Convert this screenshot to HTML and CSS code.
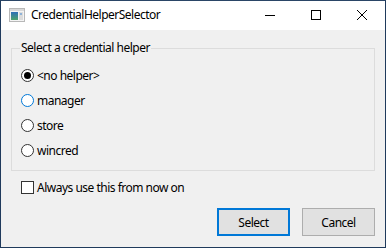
FILE: index.html
```html
<!DOCTYPE html>
<html>
<head>
<meta charset="utf-8">
<link rel="stylesheet" href="styles.css">
</head>
<body>
<div class="window">
  <div class="titlebar">
    <svg class="app-icon" width="16" height="14" viewBox="0 0 16 14">
      <rect x="0.5" y="0.5" width="15" height="13" fill="#f4f4f4" stroke="#b8b8b8"/>
      <rect x="1" y="1" width="14" height="2" fill="#d8d8d8"/>
      <defs>
        <linearGradient id="g" x1="0" y1="0" x2="0" y2="1">
          <stop offset="0" stop-color="#2f6fb8"/>
          <stop offset="1" stop-color="#4fa36a"/>
        </linearGradient>
      </defs>
      <rect x="2" y="4" width="7" height="8" fill="url(#g)"/>
      <rect x="10" y="4" width="4" height="8" fill="#dcdcdc"/>
      <rect x="11" y="5" width="2" height="2" fill="#8fb3d8"/>
    </svg>
    <span class="title">CredentialHelperSelector</span>
    <div class="controls">
      <span class="ctl"><svg width="10" height="10" viewBox="0 0 10 10"><path d="M0 5.5H10" stroke="#000" stroke-width="1"/></svg></span>
      <span class="ctl"><svg width="10" height="10" viewBox="0 0 10 10"><rect x="0.5" y="0.5" width="9" height="9" fill="none" stroke="#000" stroke-width="1"/></svg></span>
      <span class="ctl"><svg width="10" height="10" viewBox="0 0 10 10"><path d="M0 0L10 10M10 0L0 10" stroke="#000" stroke-width="1"/></svg></span>
    </div>
  </div>
  <div class="content">
    <fieldset class="group">
      <legend>Select a credential helper</legend>
      <div class="option"><span class="radio checked"></span><span>&lt;no helper&gt;</span></div>
      <div class="option"><span class="radio focus"></span><span>manager</span></div>
      <div class="option"><span class="radio"></span><span>store</span></div>
      <div class="option"><span class="radio"></span><span>wincred</span></div>
    </fieldset>
    <div class="check-row"><span class="checkbox"></span><span>Always use this from now on</span></div>
    <div class="buttons">
      <button class="btn default">Select</button>
      <button class="btn">Cancel</button>
    </div>
  </div>
</div>
</body>
</html>
```
FILE: styles.css
```css
html, body {
  margin: 0;
  padding: 0;
  background: #f0f0f0;
}
body {
  font-family: "Noto Sans", "Open Sans", sans-serif;
  font-size: 12px;
  letter-spacing: -0.5px;
  color: #000;
}
.window {
  width: 386px;
  height: 248px;
  box-sizing: border-box;
  border: 1px solid #1f3a5c;
  border-top-color: #2a4566;
  background: #f0f0f0;
  display: flex;
  flex-direction: column;
}
.titlebar {
  height: 29px;
  background: #fff;
  display: flex;
  align-items: center;
  flex-shrink: 0;
}
.app-icon {
  margin-left: 8px;
  margin-top: -1px;
}
.title {
  margin-left: 6px;
  font-size: 12px;
  line-height: 16px;
  margin-top: -2px;
}
.controls {
  margin-left: auto;
  display: flex;
  height: 29px;
}
.ctl {
  width: 46px;
  display: flex;
  align-items: center;
  justify-content: center;
}
.ctl svg { display: block; margin-top: -2px; }
.content {
  flex: 1;
  display: flex;
  flex-direction: column;
  padding: 0 10px 0 10px;
}
.group {
  margin: 10px 0 0 0;
  padding: 7px 0 0 9px;
  border: 1px solid #dcdcdc;
  height: 131px;
  box-sizing: border-box;
}
.group legend {
  padding: 0 1px;
  margin-left: -1px;
  line-height: 16px;
}
.option {
  display: flex;
  align-items: center;
  height: 25px;
  gap: 3px;
}
.radio {
  width: 13px;
  height: 13px;
  box-sizing: border-box;
  border: 1px solid #333;
  border-radius: 50%;
  background: #fff;
  display: flex;
  align-items: center;
  justify-content: center;
}
.radio.focus { border-color: #0078d7; }
.radio.checked::after {
  content: "";
  width: 7px;
  height: 7px;
  border-radius: 50%;
  background: #000;
}
.check-row {
  display: flex;
  align-items: center;
  gap: 3px;
  margin: 10px 0 0 10px;
  height: 13px;
}
.checkbox {
  width: 13px;
  height: 13px;
  box-sizing: border-box;
  border: 1px solid #333;
  background: #fff;
}
.buttons {
  display: flex;
  justify-content: flex-end;
  gap: 12px;
  margin-top: 14px;
}
.btn {
  width: 73px;
  height: 28px;
  box-sizing: border-box;
  background: #e1e1e1;
  border: 1px solid #adadad;
  font-family: "Noto Sans", "Open Sans", sans-serif;
  font-size: 12px;
  letter-spacing: -0.5px;
  color: #000;
  padding: 0;
}
.btn.default {
  border: 2px solid #0078d7;
}
```
